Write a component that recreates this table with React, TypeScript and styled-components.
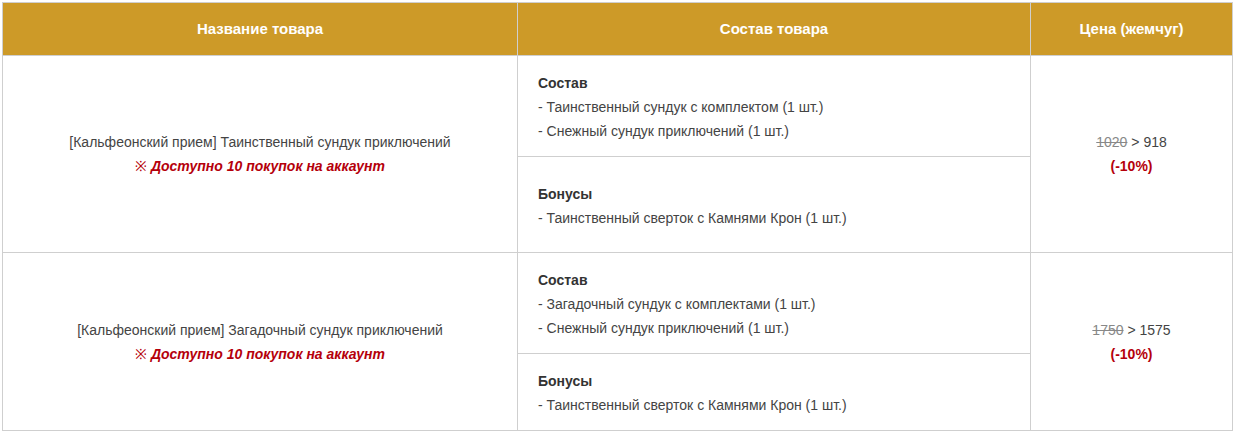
import React from "react";
import styled, { createGlobalStyle } from "styled-components";

const Global = createGlobalStyle`
  html, body { margin: 0; padding: 0; background: #fff; }
  body { padding: 2px; font-family: "Liberation Sans", Arial, sans-serif; }
`;

const Table = styled.table`
  width: 1230px;
  border-collapse: collapse;
  table-layout: fixed;
  font-size: 14px;
  line-height: 24px;
  color: #444;
`;

const Col = styled.col<{ $w: number }>`
  width: ${(p) => p.$w}px;
`;

const Head = styled.th`
  height: 52px;
  padding: 0;
  background: #cd9a28;
  color: #fff;
  font-size: 15px;
  font-weight: bold;
  text-align: center;
  vertical-align: middle;
  border: 1px solid #cfcfcf;
`;

const NameCell = styled.td`
  border: 1px solid #cfcfcf;
  text-align: center;
  vertical-align: middle;
  padding: 0 10px;
`;

const Note = styled.div`
  color: #b5000b;
  font-weight: bold;
  font-style: italic;
`;

const Mark = styled.span`
  font-weight: normal;
  font-style: normal;
`;

const PartCell = styled.td<{ $h?: number }>`
  border: 1px solid #cfcfcf;
  text-align: left;
  vertical-align: middle;
  padding: 15px 20px 13px;
  ${(p) => (p.$h ? `height: ${p.$h}px; box-sizing: border-box;` : "")}
`;

const PartTitle = styled.div`
  font-weight: bold;
  color: #333;
`;

const PriceCell = styled.td`
  border: 1px solid #cfcfcf;
  text-align: center;
  vertical-align: middle;
`;

const OldPrice = styled.s`
  color: #888;
`;

const Discount = styled.div`
  color: #b5000b;
  font-weight: bold;
`;

type Product = {
  name: string;
  items: string[];
  bonuses: string[];
  oldPrice: number;
  price: number;
  bonusHeight?: number;
};

const products: Product[] = [
  {
    name: "[Кальфеонский прием] Таинственный сундук приключений",
    items: ["Таинственный сундук с комплектом (1 шт.)", "Снежный сундук приключений (1 шт.)"],
    bonuses: ["Таинственный сверток с Камнями Крон (1 шт.)"],
    oldPrice: 1020,
    price: 918,
    bonusHeight: 96,
  },
  {
    name: "[Кальфеонский прием] Загадочный сундук приключений",
    items: ["Загадочный сундук с комплектами (1 шт.)", "Снежный сундук приключений (1 шт.)"],
    bonuses: ["Таинственный сверток с Камнями Крон (1 шт.)"],
    oldPrice: 1750,
    price: 1575,
  },
];

export default function App() {
  return (
    <>
      <Global />
      <Table>
        <colgroup>
          <Col $w={515} />
          <Col $w={513} />
          <Col $w={202} />
        </colgroup>
        <thead>
          <tr>
            <Head>Название товара</Head>
            <Head>Состав товара</Head>
            <Head>Цена (жемчуг)</Head>
          </tr>
        </thead>
        <tbody>
          {products.map((p) => (
            <React.Fragment key={p.name}>
              <tr>
                <NameCell rowSpan={2}>
                  <div>{p.name}</div>
                  <Note>
                    <Mark>※</Mark> Доступно 10 покупок на аккаунт
                  </Note>
                </NameCell>
                <PartCell>
                  <PartTitle>Состав</PartTitle>
                  {p.items.map((i) => (
                    <div key={i}>- {i}</div>
                  ))}
                </PartCell>
                <PriceCell rowSpan={2}>
                  <div>
                    <OldPrice>{p.oldPrice}</OldPrice> &gt; {p.price}
                  </div>
                  <Discount>(-10%)</Discount>
                </PriceCell>
              </tr>
              <tr>
                <PartCell $h={p.bonusHeight}>
                  <PartTitle>Бонусы</PartTitle>
                  {p.bonuses.map((i) => (
                    <div key={i}>- {i}</div>
                  ))}
                </PartCell>
              </tr>
            </React.Fragment>
          ))}
        </tbody>
      </Table>
    </>
  );
}
